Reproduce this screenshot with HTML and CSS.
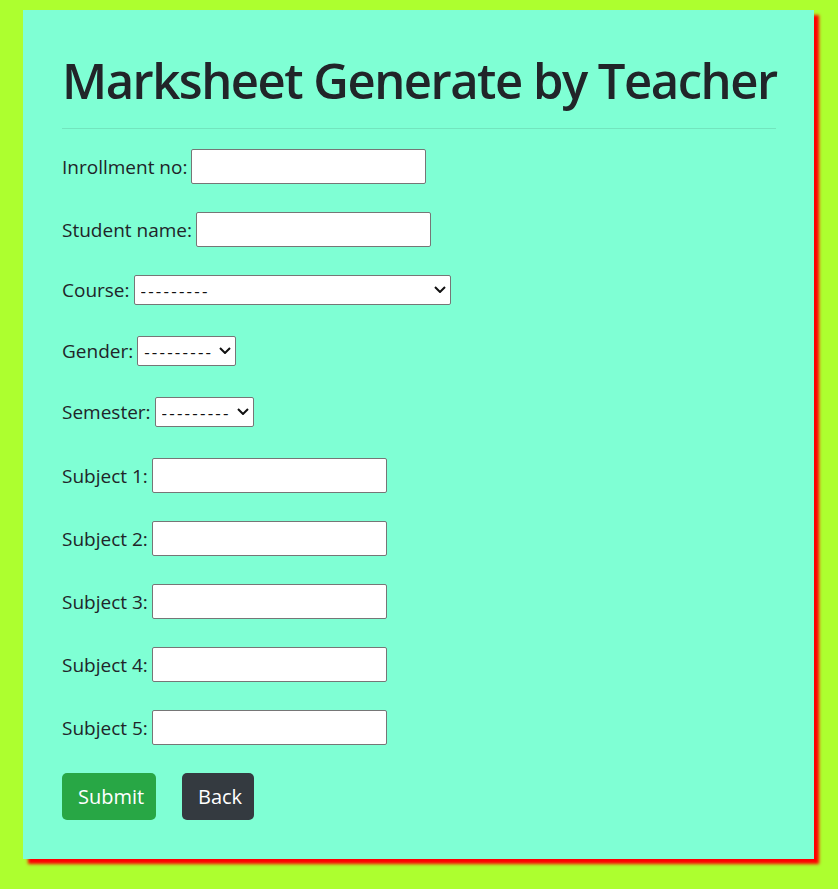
FILE: index.html
```html
<!DOCTYPE html>
<html lang="en">
<head>
<meta charset="utf-8">
<title>Marksheet Generate by Teacher</title>
<link rel="stylesheet" href="styles.css">
</head>
<body>
<div class="card">
  <h1 class="title">Marksheet Generate by Teacher</h1>
  <hr class="rule">
  <form class="form">
    <div class="row"><label class="lbl" for="enr">Inrollment no:</label><input class="txt" id="enr" type="text"></div>
    <div class="row"><label class="lbl" for="name">Student name:</label><input class="txt" id="name" type="text"></div>
    <div class="row sel"><label class="lbl" for="course">Course:</label><span class="dd-wrap"><select class="dd dd-wide" id="course"><option>---------</option></select><svg class="chev" viewBox="0 0 12 7" width="12" height="7"><path d="M1 1l5 5 5-5" fill="none" stroke="#111" stroke-width="2"/></svg></span></div>
    <div class="row sel"><label class="lbl" for="gender">Gender:</label><span class="dd-wrap"><select class="dd" id="gender"><option>---------</option></select><svg class="chev" viewBox="0 0 12 7" width="12" height="7"><path d="M1 1l5 5 5-5" fill="none" stroke="#111" stroke-width="2"/></svg></span></div>
    <div class="row sel"><label class="lbl" for="sem">Semester:</label><span class="dd-wrap"><select class="dd" id="sem"><option>---------</option></select><svg class="chev" viewBox="0 0 12 7" width="12" height="7"><path d="M1 1l5 5 5-5" fill="none" stroke="#111" stroke-width="2"/></svg></span></div>
    <div class="row"><label class="lbl" for="s1">Subject 1:</label><input class="txt" id="s1" type="text"></div>
    <div class="row"><label class="lbl" for="s2">Subject 2:</label><input class="txt" id="s2" type="text"></div>
    <div class="row"><label class="lbl" for="s3">Subject 3:</label><input class="txt" id="s3" type="text"></div>
    <div class="row"><label class="lbl" for="s4">Subject 4:</label><input class="txt" id="s4" type="text"></div>
    <div class="row"><label class="lbl" for="s5">Subject 5:</label><input class="txt" id="s5" type="text"></div>
    <div class="actions">
      <button class="btn btn-green" type="button">Submit</button>
      <button class="btn btn-dark" type="button">Back</button>
    </div>
  </form>
</div>
</body>
</html>
```
FILE: styles.css
```css
html, body {
  margin: 0;
  padding: 0;
}
body {
  background: #adff2f;
  font-family: "Open Sans", "Noto Sans", sans-serif;
  color: #212529;
  padding: 10px 24px 30px 23px;
}
.card {
  box-sizing: border-box;
  width: 791px;
  height: 849px;
  background: #7fffd4;
  box-shadow: 5px 5px 3px #ff0000;
  padding: 38px 38px 0 39px;
}
.title {
  margin: 0;
  font-size: 49px;
  font-weight: 600;
  line-height: 64px;
  letter-spacing: -1.5px;
  white-space: nowrap;
}
.rule {
  margin: 16px 0 20px;
  border: 0;
  border-top: 1px solid rgba(0, 0, 0, 0.1);
}
.form {
  display: flex;
  flex-direction: column;
}
.row {
  display: flex;
  align-items: center;
  height: 35px;
  margin-bottom: 28px;
}
.row.sel {
  height: 30px;
  margin-bottom: 31px;
}
.lbl {
  font-size: 19px;
  margin-right: 4px;
  white-space: nowrap;
}
.txt {
  box-sizing: border-box;
  width: 235px;
  height: 35px;
  margin: 0;
  border: 1px solid #767676;
  border-radius: 2px;
  background: #fff;
  font-size: 16px;
}
.dd-wrap {
  position: relative;
  display: flex;
}
.dd {
  box-sizing: border-box;
  width: 99px;
  height: 30px;
  margin: 0;
  padding: 0 0 0 6px;
  border: 1px solid #767676;
  border-radius: 2px;
  background: #fff;
  color: #111;
  font-family: "Open Sans", sans-serif;
  font-size: 17px;
  letter-spacing: 2.2px;
  -webkit-appearance: none;
  appearance: none;
}
.dd-wide {
  width: 317px;
}
.chev {
  position: absolute;
  right: 5px;
  top: 11px;
  pointer-events: none;
}
.actions {
  display: flex;
  gap: 26px;
}
.btn {
  box-sizing: border-box;
  height: 47px;
  padding: 0 16px;
  border: 0;
  border-radius: 5px;
  color: #fff;
  font-family: "Open Sans", sans-serif;
  font-size: 20px;
}
.btn-green {
  background: #28a745;
  width: 94px;
}
.btn-dark {
  background: #343a40;
  width: 72px;
}
```
